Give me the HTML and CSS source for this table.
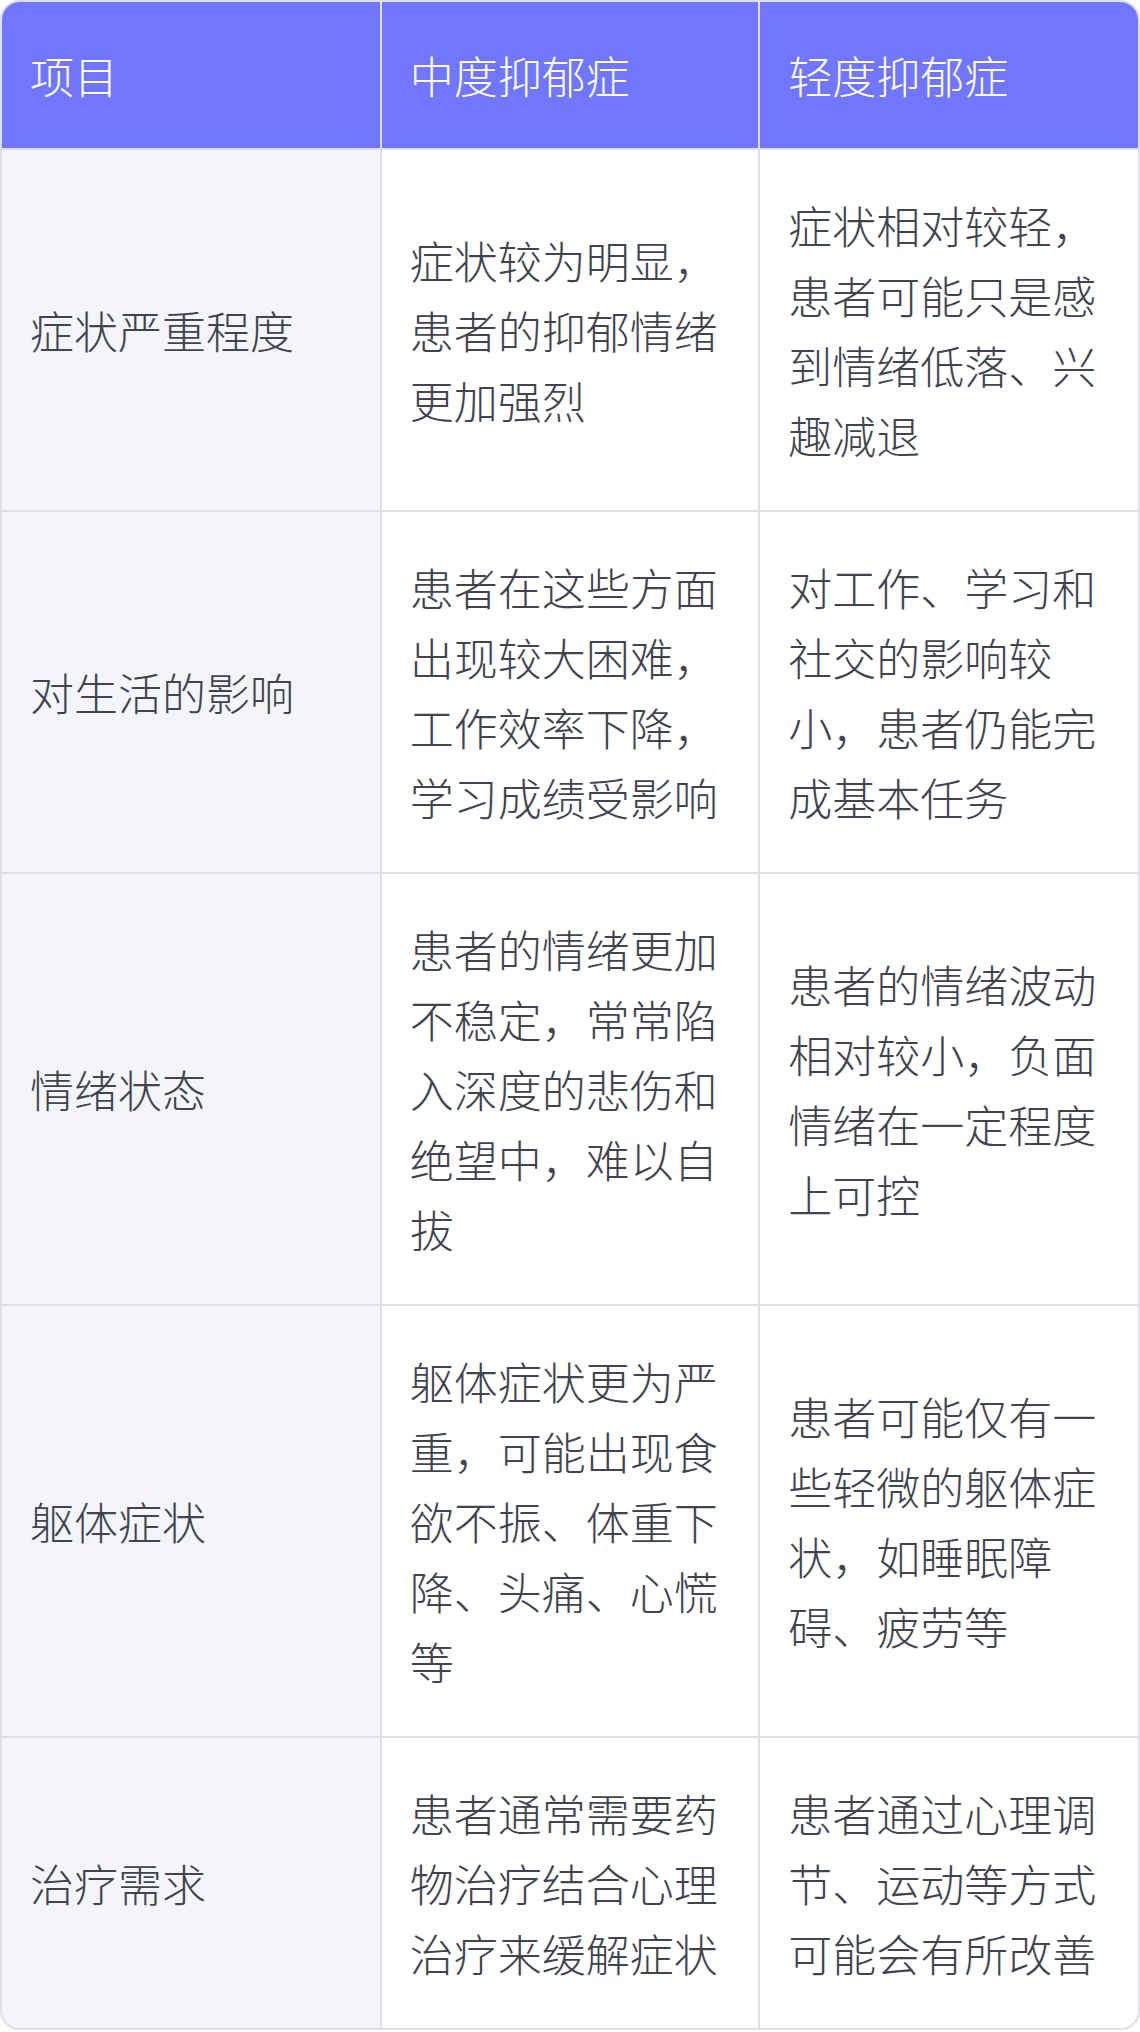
FILE: index.html
```html
<!DOCTYPE html>
<html lang="zh-CN">
<head>
  <meta charset="UTF-8">
  <title>中度抑郁症与轻度抑郁症对比</title>
  <link rel="stylesheet" href="styles.css">
</head>
<body>

  <div class="table-wrap">
    <table class="compare">
      <thead>
        <tr>
          <th>项目</th>
          <th>中度抑郁症</th>
          <th>轻度抑郁症</th>
        </tr>
      </thead>
      <tbody>
        <tr>
          <td class="item">症状严重程度</td>
          <td>症状较为明显，患者的抑郁情绪更加强烈</td>
          <td>症状相对较轻，患者可能只是感到情绪低落、兴趣减退</td>
        </tr>
        <tr>
          <td class="item">对生活的影响</td>
          <td>患者在这些方面出现较大困难，工作效率下降，学习成绩受影响</td>
          <td>对工作、学习和社交的影响较小，患者仍能完成基本任务</td>
        </tr>
        <tr>
          <td class="item">情绪状态</td>
          <td>患者的情绪更加不稳定，常常陷入深度的悲伤和绝望中，难以自拔</td>
          <td>患者的情绪波动相对较小，负面情绪在一定程度上可控</td>
        </tr>
        <tr>
          <td class="item">躯体症状</td>
          <td>躯体症状更为严重，可能出现食欲不振、体重下降、头痛、心慌等</td>
          <td>患者可能仅有一些轻微的躯体症状，如睡眠障碍、疲劳等</td>
        </tr>
        <tr>
          <td class="item">治疗需求</td>
          <td>患者通常需要药物治疗结合心理治疗来缓解症状</td>
          <td>患者通过心理调节、运动等方式可能会有所改善</td>
        </tr>
      </tbody>
    </table>
  </div>

</body>
</html>
```

FILE: styles.css
```css
body {
  margin: 0;
  background: #ffffff;
  font-family: "Noto Sans CJK SC", "Noto Sans", sans-serif;
  color: #41444f;
}

.table-wrap {
  width: 1140px;
  box-sizing: border-box;
  border: 2px solid #dfe0e6;
  border-radius: 20px;
  overflow: hidden;
  box-shadow: 0 1px 2px rgba(0,0,0,0.06);
}

.compare {
  width: 100%;
  border-collapse: collapse;
  table-layout: fixed;
  font-size: 44px;
  line-height: 70px;
  font-weight: 300;
}

.compare th,
.compare td {
  padding: 40px 28px;
  text-align: left;
  vertical-align: middle;
  border-right: 2px solid #dfe0e6;
  border-bottom: 2px solid #dfe0e6;
}

.compare th:last-child,
.compare td:last-child {
  border-right: none;
}

.compare tbody tr:last-child td {
  border-bottom: none;
}

.compare th {
  padding: 38px 28px;
  background: #7176ff;
  color: #ffffff;
  font-weight: 300;
}

.compare td {
  background: #ffffff;
}

.compare td.item {
  background: #f4f5fa;
}
```
